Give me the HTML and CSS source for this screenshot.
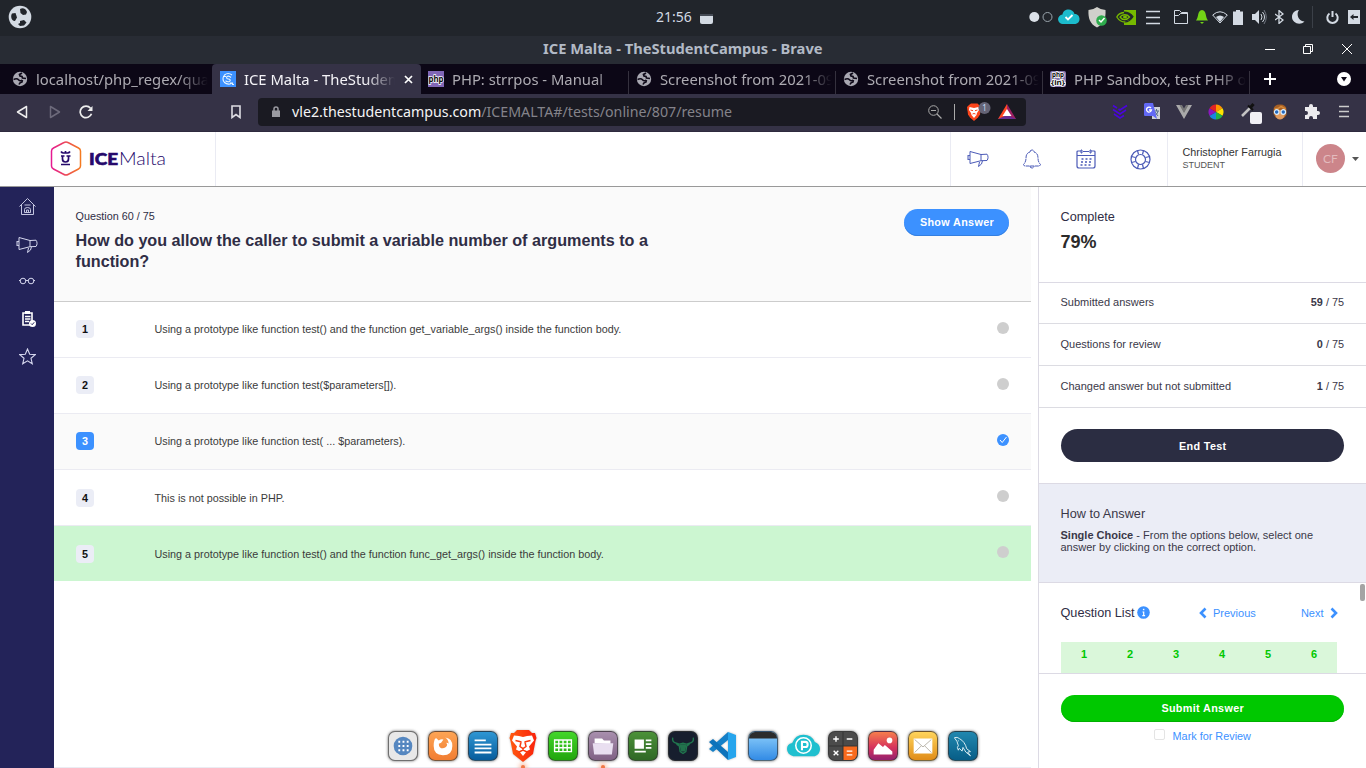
FILE: index.html
```html
<!DOCTYPE html>
<html lang="en">
<head>
<meta charset="utf-8">
<title>ICE Malta - TheStudentCampus</title>
<link rel="stylesheet" href="styles.css">
</head>
<body>
<svg class="defs" width="0" height="0">
  <defs>
    <symbol id="globe" viewBox="0 0 16 16"><circle cx="8" cy="8" r="7.200" fill="#a9a8b2"/><path d="M1.500 8.500q3.500-1.500 5 .3t3.500.2M7 13.500q.5-2 3-2.500l.5-2" fill="none" stroke="#0f0a19" stroke-width="1.500"/><path d="M10 2l-2.500 1.500.5 1.500 2 .5.500 1.500 3.500.500" fill="none" stroke="#0f0a19" stroke-width="1.700"/></symbol>
    <symbol id="horn" viewBox="0 0 22 18"><path d="M3 1.500L14 4.500 20 4.200c1.400 1.800 1.400 4.500 0 6.300L14 10.700 3 13.500zM14 4.500v6.200M1 5v5M3 5.500l-2 .2M3 9.500l-2-.2M15.500 10.700l-1 3.300-3 2.500 1-4.500" fill="none" stroke="currentColor" stroke-width="1"/></symbol>
  </defs>
</svg>

<div class="sysbar">
  <svg class="distro" width="24" height="24" viewBox="0 0 24 24"><circle cx="12" cy="12" r="11.300" fill="#d3dae3"/><g fill="#21252b"><path d="M12 4c3-2 6 0 7 3l-1 2.500-3 .5-2.500-2z"/><path d="M4 8.500l3.500-.5 1.500 4.500-2 3.500c-3 .500-5-4-3-7.500z"/><path d="M12 16l4-1 2.500 2.500-2.500 3-4 .5-2-2 2-1z"/></g></svg>
  <div class="clock"><span>21:56</span><svg width="13" height="11"><path d="M0 1h13v7q0 2-2 2H2q-2 0-2-2z" fill="#d3dae3"/><path d="M0 1h13" stroke="#444a54" stroke-width="2"/></svg></div>
  <div class="tray">
    <svg width="26" height="12"><circle cx="6.300" cy="6" r="5" fill="#dbe1e8"/><circle cx="19.500" cy="6" r="4.500" fill="none" stroke="#9aa5ad"/></svg>
    <svg width="22" height="16" viewBox="0 0 22 16"><path d="M5 15a4.700 4.700 0 0 1-.5-9.400C5-1 15-1.500 16.500 5c6-.5 7 9 1 10z" fill="#1cbccd"/><path d="M7.500 8l2.500 2.500 4.500-4.500" stroke="#fff" stroke-width="1.800" fill="none"/></svg>
    <svg class="shield" width="19" height="21" viewBox="0 0 19 21"><path d="M9 0q4 3 8.500 3c.5 8-1.500 14-8.500 17.500C2 17 0 11 .5 3Q5 3 9 0z" fill="#d0d0cb"/><circle cx="13.500" cy="13.500" r="5.300" fill="#2eac4d"/><path d="M11 13l2 2 3.500-4" stroke="#fff" stroke-width="1.500" fill="none"/></svg>
    <svg width="20" height="15" viewBox="0 0 20 15"><path d="M8 0h12v15H8z" fill="#76b900"/><path d="M.5 7C4 1 13 0 17 7 12 13 4 12.500.5 7z" fill="#21252b"/><path d="M8 2.500C4 3 1.500 5.500.8 7 3 10.500 6 12 9 12" stroke="#76b900" fill="none" stroke-width="1.300"/><path d="M8 2q6 0 9 4.500Q14 12 8.500 12" stroke="#21252b" fill="none" stroke-width="1.200"/><path d="M4 7c2-3 7-3 9.500 0-3 3.500-7 3.500-9.500 0z" stroke="#76b900" fill="none" stroke-width="1.300"/><ellipse cx="9" cy="7" rx="2" ry="1.500" fill="#76b900"/></svg>
    <svg width="14" height="15"><path d="M0 1.500h14M0 7.500h14M0 13.500h14" stroke="#d3dae3" stroke-width="1.500"/></svg>
    <svg width="14" height="14"><path d="M.5 13.500V.5h5l2 2h6v11zM.5 5.500h4l2-2h7" stroke="#d3dae3" fill="none"/></svg>
    <svg width="12" height="14"><path d="M6 0c5 1 3 7 6 10.500H0C3 7 1 1 6 0zM4 12h4l-2 2z" fill="#73d216"/></svg>
    <svg width="16" height="13" viewBox="0 0 16 13"><path d="M.7 4Q8-2.500 15.300 4L8 12z" fill="none" stroke="#d3dae3"/><path d="M4 6q4-3 8 0l-4 5z" fill="#d3dae3"/></svg>
    <svg width="10" height="15"><path d="M3 0h4v1.500h3V15H0V1.500h3z" fill="#d3dae3"/></svg>
    <svg width="15" height="14"><path d="M0 4h3l4-4v14l-4-4H0z" fill="#d3dae3"/><path d="M9 4q2 3 0 6M10.500 2q4 5 0 10" fill="none" stroke="#d3dae3"/><path d="M12 0q4.500 7 0 14" fill="none" stroke="#737984"/></svg>
    <svg width="9" height="14"><path d="M0 4l8 6-4 3.500V.5L8 4l-8 6" fill="none" stroke="#d3dae3" stroke-width="1.300"/></svg>
    <svg width="13" height="14"><path d="M7 0C4 4 6 11 12.500 11.500 8 16 0 13 0 7 0 3 3 0 7 0z" fill="#d3dae3"/></svg>
    <span class="tray-rule"></span>
    <svg width="13" height="13"><path d="M3.500 2.500a5.200 5.200 0 1 0 6 0M6.500 0v6" fill="none" stroke="#d3dae3" stroke-width="2"/></svg>
    <svg width="12" height="14"><path d="M0 0h12v14H0z" fill="#d3dae3"/><path d="M2 7l3.500-3v2H10v2H5.500v2z" fill="#21252b"/></svg>
  </div>
</div>

<div class="titlebar">
  <span class="wintitle">ICE Malta - TheStudentCampus - Brave</span>
  <div class="winbtns">
    <svg width="10" height="12"><path d="M0 6.500h10" stroke="#fff"/></svg>
    <svg width="10" height="12"><path d="M.5 3.500h7v7h-7zM2.500 3V1.500h7v7H8" fill="none" stroke="#fff"/></svg>
    <svg width="12" height="12"><path d="M1 1l10 10M11 1L1 11" stroke="#fff"/></svg>
  </div>
</div>

<div class="tabs">
  <div class="tab first"><svg width="16" height="16"><use href="#globe"/></svg><span>localhost/php_regex/quan</span></div>
  <div class="tab active"><svg width="16" height="16"><path d="M0 0h16v16H0z" fill="#3c91ff"/><path d="M12 4Q8 1 4.500 4q-3 4 0 7.500Q8 14.500 12 12M11 6.500Q9 4.500 7 5.500q-1 1.500.5 2.200l2 .5q1.500 1 0 2.300-2 .8-4-.7M3 5.500h3M10 12h2.500v1.500H14" fill="none" stroke="#e8f5ff" stroke-width="1.100"/></svg><span>ICE Malta - TheStudent</span><svg class="close" width="9" height="9"><path d="M1 1l7 7M8 1L1 8" stroke="#fff" stroke-width="1.700"/></svg></div>
  <div class="tab manual"><svg class="php" width="16" height="16"><path d="M0 0h16v16H0z" fill="#8067b7"/><text x="8" y="11" textLength="15" lengthAdjust="spacingAndGlyphs">php</text></svg><span>PHP: strrpos - Manual</span></div>
  <div class="tab"><svg width="16" height="16"><use href="#globe"/></svg><span>Screenshot from 2021-09</span></div>
  <div class="tab"><svg width="16" height="16"><use href="#globe"/></svg><span>Screenshot from 2021-09</span></div>
  <div class="tab"><svg class="php small" width="16" height="16"><rect width="16" height="16" rx="2" fill="#8578ad"/><text x="8" y="6" textLength="12" lengthAdjust="spacingAndGlyphs">php</text><text x="8" y="13.500" textLength="14" lengthAdjust="spacingAndGlyphs">{in}</text></svg><span>PHP Sandbox, test PHP on</span></div>
  <svg class="plus" width="12" height="12"><path d="M6 0v12M0 6h12" stroke="#fff" stroke-width="2"/></svg>
  <svg class="tabmenu" width="14" height="14"><circle cx="7" cy="7" r="7" fill="#fff"/><path d="M4 5h6l-3 4.500z" fill="#0c0716"/></svg>
</div>

<div class="toolbar">
  <svg class="nav-back" width="12" height="14"><path d="M10.500 1.500v11L1.500 7z" fill="none" stroke="#eee" stroke-width="1.500" stroke-linejoin="round"/></svg>
  <svg class="nav-fwd" width="12" height="14"><path d="M1.500 1.500v11L10.500 7z" fill="none" stroke="#6d6a7b" stroke-width="1.500" stroke-linejoin="round"/></svg>
  <svg class="nav-reload" width="14" height="14"><path d="M11.500 3.200A5.800 5.800 0 1 0 12.500 8.800" fill="none" stroke="#eee" stroke-width="1.700"/><path d="M13.500 1v5H8.500z" fill="#eee"/></svg>
  <svg class="bookmark" width="10" height="14"><path d="M1 1h8v11.500L5 9.500 1 12.500z" fill="none" stroke="#dedde3" stroke-width="1.600"/></svg>
  <div class="urlbar">
    <svg width="8" height="12"><path d="M0 4.500h8V11H0z" fill="#9a9aa1"/><path d="M2 5V3q0-2 2-2t2 2v2" fill="none" stroke="#9a9aa1" stroke-width="1.500"/></svg>
    <span class="url"><b>vle2.thestudentcampus.com</b>/ICEMALTA#/tests/online/807/resume</span>
    <svg class="magnify" width="14" height="14"><circle cx="5.500" cy="5.500" r="4.800" fill="none" stroke="#aaa"/><path d="M9 9l4.500 4.500M3 5.500h5" stroke="#aaa" stroke-width="1.200"/></svg>
    <span class="urlrule"></span>
    <svg class="lion" width="26" height="20" viewBox="0 0 26 20"><path d="M5 1.500h6.500l3 3-.5 8-2 3-4 3.500-4-3.500-2-3L1 5l2-2z" fill="#fb451b"/><path d="M3.500 5l4.500 1 4.500-1 .5 3-2 3-.5 2-2.500 3-2.500-3-.500-2-2-3z" fill="#fff"/><path d="M4.500 8l2.500.7M9 8.700l2.500-.7M6.500 12q1.500-1 3 0" stroke="#fb451b" fill="none"/><circle cx="18.500" cy="6" r="6" fill="#656476"/><text x="18.500" y="9">1</text></svg>
    <svg class="bat" width="18" height="15"><path d="M9 0v15H0z" fill="#ff4724"/><path d="M9 0l9 15H9z" fill="#9e1f63"/><path d="M0 15l9-4 9 4z" fill="#662d91"/><path d="M9 5l4.500 7h-9z" fill="#fff"/></svg>
  </div>
  <div class="exts">
    <svg width="16" height="16"><path d="M1 1.500l4 2.500M15 1.500L8 6 6.500 5M1 5.500l7 4.500 6-4M2 10l6 4 4-2.500" fill="none" stroke="#4a05dc" stroke-width="1.700"/></svg>
    <svg width="17" height="17"><path d="M8 4h8v12H8z" fill="#cfd3d8"/><path d="M10 8h5M12.500 6v2M11 12q3-1 3-4M11 9l3 4" stroke="#56708a" fill="none"/><path d="M1 0h8l4 16-4-3H1q-1 0-1-1V1z" fill="#6269f5"/><path d="M7 5A2.500 2.500 0 1 0 7.500 7H5" fill="none" stroke="#fff" stroke-width="1.300"/></svg>
    <svg width="16" height="14"><path d="M0 0h4l4 7 4-7h4L8 14z" fill="#aaa"/><path d="M3.500 0H6l2 3.500L10 0h2.500L8 8z" fill="#777"/></svg>
    <svg width="16" height="16" viewBox="-8 -8 16 16"><path d="M0 0V-7.500A7.500 7.500 0 0 1 6.500-3.700z" fill="#ff9500"/><path d="M0 0l6.500-3.700a7.500 7.500 0 0 1 0 7.400z" fill="#ffe300"/><path d="M0 0l6.500 3.700A7.500 7.500 0 0 1 0 7.500z" fill="#20b545"/><path d="M0 0v7.500a7.500 7.500 0 0 1-6.500-3.800z" fill="#1787df"/><path d="M0 0l-6.500 3.700a7.500 7.500 0 0 1 0-7.400z" fill="#8c16bf"/><path d="M0 0l-6.500-3.700A7.500 7.500 0 0 1 0-7.500z" fill="#e02424"/></svg>
    <svg class="picker" width="22" height="22"><path d="M2 14l8-8" stroke="#c4c4c4" stroke-width="2.500"/><path d="M8 3.500l5 4.500" stroke="#111" stroke-width="2"/><path d="M10.500 5.500l3-3.500" stroke="#111" stroke-width="3"/><rect x="10" y="10" width="12" height="12" rx="2" fill="#f1f0f5"/></svg>
    <svg width="16" height="16"><path d="M1.500 10V6q0-5.500 6.500-5.500T14.500 6v5L12 14H4z" fill="#a76025"/><path d="M3.500 6h9v6q-1.500 3.500-4.500 3.500T3.500 12z" fill="#e09c60"/><path d="M2.500 5q4 0 6.500-2.500L13.500 5" stroke="#d68a39" stroke-width="1.500" fill="none"/><circle cx="4.700" cy="8" r="2.300" fill="#2569bd" stroke="#d8eeff" stroke-width="1.200"/><circle cx="11.300" cy="8" r="2.300" fill="#2569bd" stroke="#d8eeff" stroke-width="1.200"/></svg>
    <svg width="16" height="16"><path d="M1 3h4V2q0-2 2-2t2 2v1h4v4h1q2 0 2 2t-2 2h-1v4H9v-1q0-2-2-2t-2 2v1H1v-4h1q2 0 2-2T2 7H1z" fill="#ecebee"/></svg>
    <svg width="10" height="13"><path d="M0 1.500h10M0 6.500h10M0 11.500h10" stroke="#ccc" stroke-width="1.700"/></svg>
  </div>
</div>

<header class="header">
  <div class="brand">
    <svg width="120" height="38" viewBox="0 0 120 38"><defs><linearGradient id="hex"><stop offset="0" stop-color="#e51a91"/><stop offset="1" stop-color="#f47a20"/></linearGradient></defs><path d="M14 2.500q2-1.200 4 0l10.500 5.500q2 1 2 3v15q0 2-2 3l-10.500 5.500q-2 1.200-4 0l-10.500-5.500q-2-1-2-3V11q0-2 2-3z" fill="none" stroke="url(#hex)" stroke-width="1.500"/><path d="M11 11.500q1 1.500 2.500 1.500h4q1.500 0 2.500-1.500M15.500 11v2M11 16h3.500M16.500 16h4M12.500 16v3q0 3 3 3t3-3v-3M11 24.500h9" fill="none" stroke="#25096b" stroke-width="1.700"/><text class="ice" x="39" y="24.700" textLength="29" lengthAdjust="spacingAndGlyphs">ICE</text><text class="malta" x="69" y="24.700" textLength="47" lengthAdjust="spacingAndGlyphs">Malta</text></svg>
  </div>
  <div class="actions">
    <svg width="22" height="18"><use href="#horn"/></svg>
    <svg width="20" height="20"><path d="M8 3q0-2 2-2t2 2q4 1 4 6 0 4 2.500 6.500l-1 1.500h-15l-1-1.500Q4 13 4 9q0-5 4-6zM8 17q0 2 2 2t2-2" fill="none" stroke="currentColor" stroke-dasharray="4 .6"/></svg>
    <svg width="20" height="20"><path d="M5 2H2Q1 2 1 3v14q0 2 2 2h14q2 0 2-2V3q0-1-1-1h-3M7 2.500h6M1 6.500h18" fill="none" stroke="currentColor" stroke-width="1.200"/><path d="M5 1h1v3H5zM14 1h1v3h-1z" fill="#fff" stroke="currentColor"/><path d="M5.500 10h2M9.500 10h2M13.500 10h2M5 13h2M9 13h2M13 13h2M4.500 16h2M8.500 16h2M12.500 16h2" stroke="currentColor" stroke-width="1.700"/></svg>
    <svg width="21" height="21" viewBox="0 0 21 21"><g fill="none" stroke="currentColor" stroke-width="1.200"><circle cx="10.500" cy="10.500" r="9.500"/><circle cx="10.500" cy="10.500" r="5"/><path d="M7.500 1.500l1 4M13.500 1.500l-1 4M7.500 19.500l1-4M13.500 19.500l-1-4M1.500 7.500l4 1M1.500 13.500l4-1M19.500 7.500l-4 1M19.500 13.500l-4-1"/></g></svg>
  </div>
  <div class="who"><div>Christopher Farrugia</div><small>STUDENT</small></div>
  <div class="account"><span class="avatar">CF</span><svg width="7" height="4"><path d="M0 0h7L3.500 4z" fill="#555"/></svg></div>
</header>

<div class="app">
  <nav class="side">
    <svg width="17" height="18"><path d="M.5 8.500l8-8 8 8M2.500 7v9.500h12V7M5.500 14.500v-3q0-2 3-2t3 2v3zM7.500 14v-2h2v2M5.500 7h6" fill="none" stroke="currentColor" stroke-width=".9"/></svg>
    <svg class="megaphone" width="22" height="18"><use href="#horn"/></svg>
    <svg class="glasses" width="16" height="8"><circle cx="4" cy="4" r="2.800" fill="none" stroke="currentColor"/><circle cx="12" cy="4" r="2.800" fill="none" stroke="currentColor"/><path d="M0 3.500h1M7 3.500h2M15 3.500h1" stroke="currentColor"/></svg>
    <svg class="clip" width="16" height="16"><path d="M2 2h9v12H2z" fill="none" stroke="#fff" stroke-width="1.600"/><path d="M4 0h5v3H4z" fill="#fff"/><path d="M4 5.500h5.500M4 8h5.500M4 10.500h4" stroke="#fff" stroke-width="1.300"/><circle cx="11.500" cy="12.500" r="3.500" fill="#fff"/><path d="M10 12.500l1.200 1.200 2-2.400" stroke="#232359" fill="none"/></svg>
    <svg width="17" height="17"><path d="M8.500 1l2.200 5.200 5.600.4-4.300 3.700 1.300 5.500-4.800-3-4.800 3L5 10.300.7 6.600l5.600-.4z" fill="none" stroke="currentColor" stroke-width="1.100"/></svg>
  </nav>

  <main class="quiz">
    <section class="question">
      <div class="qtext"><p>Question 60 / 75</p><h1>How do you allow the caller to submit a variable number of arguments to a function?</h1></div>
      <button class="btn show">Show Answer</button>
    </section>
    <div class="option"><b>1</b><span>Using a prototype like function test() and the function get_variable_args() inside the function body.</span><i></i></div>
    <div class="option"><b>2</b><span>Using a prototype like function test($parameters[]).</span><i></i></div>
    <div class="option chosen"><b>3</b><span>Using a prototype like function test( ... $parameters).</span><i><svg width="12" height="12"><path d="M3 6l2.200 2.500L9.500 3" fill="none" stroke="#fff"/></svg></i></div>
    <div class="option low"><b>4</b><span>This is not possible in PHP.</span><i></i></div>
    <div class="option low correct"><b>5</b><span>Using a prototype like function test() and the function func_get_args() inside the function body.</span><i></i></div>
  </main>

  <aside class="panel">
    <section class="complete"><h2>Complete</h2><strong>79%</strong></section>
    <div class="stat"><span>Submitted answers</span><span><b>59</b> / 75</span></div>
    <div class="stat"><span>Questions for review</span><span><b>0</b> / 75</span></div>
    <div class="stat"><span>Changed answer but not submitted</span><span><b>1</b> / 75</span></div>
    <section class="end"><button class="btn dark">End Test</button></section>
    <section class="howto"><h2>How to Answer</h2><p><b>Single Choice</b> - From the options below, select one answer by clicking on the correct option.</p></section>
    <section class="list">
      <div class="listhead">
        <h2>Question List</h2>
        <svg class="info" width="13" height="13"><circle cx="6.500" cy="6.500" r="6.300" fill="#3c91ff"/><path d="M6.700 5.500v4.500M5.500 6h1.200M5.300 9.700h2.800" fill="none" stroke="#fff" stroke-width="1.200"/><path d="M5.900 2.800h1.500v1.400H5.900z" fill="#fff"/></svg>
        <a class="prev"><svg width="8" height="12"><path d="M6.500 1.500L2 6l4.500 4.500" fill="none" stroke="#3c91ff" stroke-width="2.600"/></svg>Previous</a>
        <a class="next">Next<svg width="8" height="12"><path d="M1.500 1.500L6 6l-4.500 4.500" fill="none" stroke="#3c91ff" stroke-width="2.600"/></svg></a>
      </div>
      <div class="numbers"><b>1</b><b>2</b><b>3</b><b>4</b><b>5</b><b>6</b></div>
      <span class="thumb"></span>
    </section>
    <section class="submit"><button class="btn green">Submit Answer</button><label><span class="box"></span>Mark for Review</label></section>
  </aside>
</div>

<div class="dock">
  <svg class="tile light" viewBox="0 0 30 30"><circle cx="15" cy="15" r="10" fill="#5587c0"/><path d="M10 10.500h12M10 15h12M10 19.500h12" stroke="#fff" stroke-width="2" stroke-dasharray="2 2.500"/></svg>
  <svg class="tile orange" viewBox="0 0 30 30"><path d="M6 8l1.500-1.500 3 2.500q2.500-2 5-1l-2.500 3.500-2.500 1q0 5 4.500 5 4-.5 4.500-4l-1-2q2 0 2.500 1 0-4-3.500-6.500 7.500 1 7.500 9 0 10-10 10-10-.5-10-10 0-4 1-7z" fill="#fff"/></svg>
  <svg class="tile blue" viewBox="0 0 30 30"><path d="M6 9h12M6 13.500h18M6 17.500h18M6 22h18" stroke="#fff" stroke-width="2"/></svg>
  <svg class="plain" viewBox="0 0 30 34"><defs><linearGradient id="lionfill"><stop offset="0" stop-color="#ff5a10"/><stop offset="1" stop-color="#fa220c"/></linearGradient></defs><path d="M9 1h12l3 3h3l1.500 5-1 3-2.500 13-10 8-10-8L2.500 12l-1-3L3 4h3z" fill="url(#lionfill)"/><path d="M6 6.500l5 .5 4 1 4-1 5-.500 2 5-5 6 1 3-3 1.500-4 5-4-5-3-1.500 1-3-5-6z" fill="#fff"/><path d="M7.500 11.500l6 1.500M22.500 11.500l-6 1.500M13 13l-1 4.500 3 2 3-2-1-4.500M15 19v2M11 23l4-2 4 2" stroke="#f93c10" stroke-width="1.500" fill="none"/></svg>
  <svg class="tile lime" viewBox="0 0 30 30"><path d="M6 8.500h18V21H6zM6 12.700h18M6 16.800h18M10.500 8.500V21M15 8.500V21M19.500 8.500V21" stroke="#fff" stroke-width="1.500" fill="none"/></svg>
  <svg class="tile mauve" viewBox="0 0 30 30"><path d="M6 12V7h8l2 2h7v4z" fill="#fff"/><path d="M4 12h22l-1.500 12h-19z" fill="#e9dff0"/></svg>
  <svg class="tile forest" viewBox="0 0 30 30"><path d="M6 8h10v10H6z" fill="#fff"/><path d="M18 9h6M18 13h6M18 17h6M6 21h12" stroke="#fff" stroke-width="2"/></svg>
  <svg class="tile night" viewBox="0 0 30 30"><path d="M4 6q-1 5 4 6l3 1 4-1 4 1 3-1q5-1 4-6M8 13l3 2 1 6 3 2 3-2 1-6 3-2" fill="none" stroke="#20764e" stroke-width="1.500"/><path d="M11 13h8l-2 8h-4z" fill="#22724d"/></svg>
  <svg class="plain" viewBox="0 0 30 32"><path d="M20 2v8L5 22l-4-3z" fill="#1580c8"/><path d="M5 9L1 12l19 18v-8z" fill="#0c73bb"/><path d="M20 2l8 3v22l-8 3z" fill="#26a5ed"/></svg>
  <svg class="tile sky" viewBox="0 0 30 30"><path d="M0 0h30v7H0z" fill="#2c2c2c"/></svg>
  <svg class="plain wide" viewBox="0 0 32 32"><path d="M6 26q-6-2-6-7t5-6Q8 5 16 5t11 7q5 2 5 7t-5 7z" fill="#1fc0cf"/><circle cx="16" cy="15.500" r="7.500" fill="none" stroke="#fff" stroke-width="1.500"/><path d="M14.500 20v-8H18q2 0 2 2.500t-2 2.500h-3.500" fill="none" stroke="#fff" stroke-width="2"/></svg>
  <svg class="tile calc" viewBox="0 0 30 30"><path d="M15 15h15v15H15z" fill="#f86a1e"/><path d="M15 0v30M0 15h30" stroke="#303030"/><path d="M4.500 7.500h6M7.500 4.500v6M19 7.500h6M5 20l5 5M10 20l-5 5M19 20.500h6M19 24.500h6" stroke="#fff" stroke-width="1.500"/></svg>
  <svg class="tile photo" viewBox="0 0 30 30"><path d="M5 24v-5l5-7 5 4 2-2 8 7v3z" fill="#fff"/><circle cx="22" cy="9" r="3" fill="#fff"/></svg>
  <svg class="tile mail" viewBox="0 0 30 30"><path d="M5 7h20v16H5z" fill="#fff"/><path d="M6 8l9 8 9-8M6 22l7-7M24 22l-7-7" fill="none" stroke="#b5b0a5"/></svg>
  <svg class="tile sea" viewBox="0 0 30 30"><path d="M6 6q3-1 5 1 6 3 8 11l4 3-3 .5 3 4-5-4-3-5-1 4-3-3-1 2q-2-3 0-5-1-5-4-8zM10 9v1" fill="none" stroke="#e5f4f7" stroke-width="1"/></svg>
  <span class="running run-a"></span><span class="running run-b"></span>
</div>
</body>
</html>
```

FILE: styles.css
```css
* { box-sizing: border-box; }
body { margin: 0; width: 1366px; height: 768px; overflow: hidden; display: flex; flex-direction: column; position: relative; background: #fff; color: #2f2d45; font: 11px/13px "Liberation Sans", Arial, sans-serif; }
svg { display: block; flex: none; }
h1, h2, p { margin: 0; }
.defs { position: absolute; }

.sysbar { height: 36px; flex: none; background: #21252b; display: flex; align-items: center; padding-left: 8px; padding-bottom: 2px; }
.clock { margin-left: 624px; display: flex; gap: 8px; align-items: center; color: #d3dae3; font: 14px/20px "Noto Sans", sans-serif; }
.clock svg { margin-top: 5px; }
.tray { margin-left: auto; padding-right: 7px; display: grid; grid-template-columns: 26px 30px 28px 27px 28px 28px 14px 22px 14px 28px 13px 24px 5px 34px 10px; justify-items: center; align-items: center; }
.tray-rule { width: 1px; height: 22px; background: #3b4048; }
.tray .shield { margin-right: 1px; }
.titlebar { height: 28px; flex: none; background: #282c34; display: flex; align-items: center; padding: 0 13px 2px 543px; color: #b2bac6; font: bold 14.700px/20px "Noto Sans", sans-serif; }
.winbtns { margin-left: auto; display: flex; gap: 28px; }
.wintitle { white-space: nowrap; margin-top: -2px; }

.tabs { height: 30px; flex: none; background: #0c0716; display: flex; align-items: center; font: 14.800px/20px "Noto Sans", sans-serif; color: #adabb2; }
.tab { width: 207px; height: 30px; flex: none; display: flex; align-items: center; gap: 8px; padding: 0 4px 0 7px; }
.tab > span { flex: 1; overflow: hidden; white-space: nowrap; -webkit-mask-image: linear-gradient(90deg, #000 calc(100% - 30px), transparent); mask-image: linear-gradient(90deg, #000 calc(100% - 30px), transparent); }
.tab.first { width: 212px; padding: 0 4px 0 12px; }
.tab.active { width: 209px; padding: 0 8px; background: #353246; color: #f4f3f7; border-radius: 4px 4px 0 0; }
.tab.active .close { margin-left: 1px; }
.tab.manual { width: 208px; }
.tab:not(.first):not(.active) { background: linear-gradient(#35313e, #35313e) right 7px / 1px 23px no-repeat; }
.php text { font: bold 9px "Noto Sans", sans-serif; text-anchor: middle; fill: #111; stroke: #fff; stroke-width: 1.500px; paint-order: stroke; }
.php.small text { font-size: 7px; }
.plus { margin-left: 14px; }
.tabmenu { margin-left: 61px; }

.toolbar { height: 38px; flex: none; background: #353246; border-bottom: 1px solid #2e2a3e; display: flex; align-items: center; padding: 0 6px 2px 16px; }
.nav-fwd { margin-left: 21px; }
.nav-reload { margin-left: 18px; }
.bookmark { margin-left: 138px; }
.urlbar { margin-left: 17px; width: 768px; height: 28px; background: #1a1a22; border-radius: 4px; display: flex; align-items: center; padding: 0 9px 0 14px; font: 14.230px/20px "Noto Sans", sans-serif; color: #84838a; }
.url { margin-left: 12px; white-space: nowrap; }
.url b { font-weight: 400; color: #f4f4f5; }
.magnify { margin-left: auto; }
.urlrule { width: 1px; height: 16px; background: #aaa; margin: 0 11px 0 12px; }
.lion text { font: 8px "Noto Sans", sans-serif; text-anchor: middle; fill: #c4dcf5; }
.bat { margin-left: 6px; margin-right: 1px; }
.exts { margin-left: auto; width: 256px; display: grid; grid-template-columns: repeat(8, 32px); justify-items: center; align-items: center; }
.exts .picker { margin: 3px 0 0 5px; }

.header { height: 55px; flex: none; display: flex; border-bottom: 1px solid #999; }
.brand { width: 216px; padding: 8px 0 0 50px; border-right: 1px solid #eaebf3; }
.ice { font: 900 17.500px Lato, sans-serif; fill: #25096b; stroke: #25096b; stroke-width: .6px; }
.malta { font: 300 18px Lato, sans-serif; fill: #25096b; }
.actions { margin-left: auto; width: 218px; border: solid #eaebf3; border-width: 0 1px; display: grid; grid-template-columns: repeat(4, 54px); justify-items: center; align-items: center; color: #4b5ab7; }
.who { width: 135px; border-right: 1px solid #eaebf3; padding: 14px 0 0 14.500px; color: #333; font-size: 10.800px; }
.who small { display: block; font-size: 9px; line-height: 12px; color: #555; }
.account { width: 63px; display: flex; align-items: center; gap: 7px; padding-left: 13px; padding-bottom: 2px; }
.account svg { margin-top: 2px; }
.avatar { width: 29px; height: 29px; border-radius: 50%; background: #cc858a; color: #e3bbbd; font: 12px/29px Lato, sans-serif; text-align: center; }

.app { flex: 1; min-height: 0; display: flex; }
.side { width: 54px; background: #232359; color: #d5d7ee; display: grid; grid-auto-rows: 37.500px; align-content: start; justify-items: center; align-items: center; padding-top: 1px; }
.side .clip { margin-left: 3px; }
.side .megaphone { margin-top: 2px; }
.side .glasses { margin-bottom: 2px; }
.quiz { width: 977px; border-bottom: 1px solid #ebecf3; }
.question { height: 115px; background: #fafafa; border-bottom: 1px solid #ccc; display: flex; justify-content: space-between; padding: 22px 22px 0 21.500px; }
.qtext { width: 600px; padding-top: 1px; font-size: 10.800px; }
.qtext h1 { font-size: 16.180px; line-height: 21px; margin-top: 7px; }
.btn { border: 0; border-radius: 17px; color: #fff; font: bold 10.800px/13px "Liberation Sans", Arial, sans-serif; letter-spacing: .35px; padding: 0 0 0 1px; display: block; width: 100%; height: 27px; }
.btn.show { width: 105px; background: #3c91ff; box-shadow: inset 0 -1px #347fe0; }
.option { height: 56px; border-bottom: 1px solid #ebebf2; display: flex; align-items: center; padding: 0 22px; font-size: 10.800px; }
.option b { width: 18px; height: 18px; margin-top: -1px; border-radius: 4px; background: #ebedf6; color: #111; text-align: center; line-height: 18px; font-size: 10.800px; }
.option span { margin-left: 60.500px; color: #3b3b3b; }
.option i { margin: -4px 0 0 auto; width: 12px; height: 12px; border-radius: 50%; background: #cecece; }
.option.chosen { background: #fafafa; }
.option.chosen b, .option.chosen i { background: #3c91ff; color: #fff; }
.option.low b { margin-top: 1px; }
.option.low span { margin-top: 2px; }
.option.correct { background: #ccf6d1; border-color: #ccf6d1; height: 55px; }
.option.correct b { margin-top: 2px; }
.option.correct i { margin-top: -2px; }

.panel { margin-left: 7px; width: 328px; border-left: 1px solid #dcdae4; display: flex; flex-direction: column; }
.panel section { padding: 0 22px 0 21.500px; border-bottom: 1px solid #dcdae4; }
.panel h2 { font-size: 12.700px; line-height: 15px; font-weight: 400; }
.panel .complete { height: 96px; padding-top: 23px; }
.complete strong { display: block; font-size: 18px; line-height: 20px; margin-top: 7px; color: #2b2b2b; }
.stat { height: 42px; border-bottom: 1px solid #dcdce2; display: flex; justify-content: space-between; align-items: center; padding: 0 22px 0 21.500px; color: #3a3848; }
.stat span + span { font-size: 10.850px; }
.stat:nth-child(2) { height: 41px; padding-bottom: 2px; }
.panel .end { height: 76px; padding-top: 21px; }
.btn.dark { height: 33px; background: #2b2d42; padding-top: 2px; }
.panel .howto { height: 99px; background: #ebedf6; padding-top: 23px; color: #3a3848; }
.howto p { line-height: 12px; margin-top: 7px; }
.panel .list { height: 91px; position: relative; padding-top: 22px; }
.listhead { display: flex; align-items: center; height: 16px; color: #3c91ff; }
.listhead h2 { color: #2f2d45; width: 76.500px; white-space: nowrap; margin-top: 1px; }
.info { margin-top: -2px; }
.listhead a { display: flex; align-items: center; }
.prev { gap: 6.500px; margin-left: 48.500px; }
.next { gap: 6.500px; margin-left: auto; margin-right: 6px; }
.numbers { width: 276px; height: 31px; margin-top: 21px; background: #daf7da; color: #00c800; display: grid; grid-template-columns: repeat(6, 46px); text-align: center; line-height: 24px; padding-left: .5px; }
.thumb { position: absolute; right: 1px; top: 1px; width: 5px; height: 17px; border-radius: 2px; background: #a4a4a4; }
.panel .submit { border: 0; padding-top: 21px; }
.btn.green { background: #00c800; box-shadow: inset 0 -1px #00b000; }
.submit label { display: flex; justify-content: center; align-items: center; gap: 8px; color: #3c91ff; margin-top: 8px; font-size: 10.850px; }
.box { width: 11px; height: 11px; border: 1px solid #e4e4e4; border-radius: 2px; margin-top: -4px; }

.dock { position: absolute; left: 383px; top: 725px; width: 600px; height: 43px; padding-bottom: 1px; display: grid; grid-template-columns: repeat(15, 40px); justify-items: center; align-items: center; overflow: hidden; }
.tile { width: 30px; height: 30px; border-radius: 7px; border: 1px solid #333a; box-shadow: 0 0 3px #666; }
.plain { width: 30px; height: 34px; filter: drop-shadow(0 0 1px #7777); }
.plain.wide { width: 33px; }
.light { background: #e8e8e8; }
.orange { background: linear-gradient(#fda454, #f17d32); }
.blue { background: linear-gradient(#2e96d3, #075c9c); }
.lime { background: linear-gradient(#43d62a, #21a50d); }
.mauve { background: linear-gradient(#a88fad, #806184); }
.forest { background: linear-gradient(#4b9138, #2f6826); }
.night { background: #171e2e; }
.sky { background: linear-gradient(#8fd0fc, #328be5); }
.calc { background: #4b4b4b; }
.photo { background: linear-gradient(#f67d4c, #d6335d 55%, #94206e); }
.mail { background: linear-gradient(#ffd45b, #e08c18); }
.sea { background: linear-gradient(#2187af, #075d87); }
.running { position: absolute; top: 40px; width: 4px; height: 4px; border-radius: 50%; background: #f07746; box-shadow: 0 0 4px 2px #f8966b88; }
.run-a { left: 138px; }
.run-b { left: 218px; }
```
